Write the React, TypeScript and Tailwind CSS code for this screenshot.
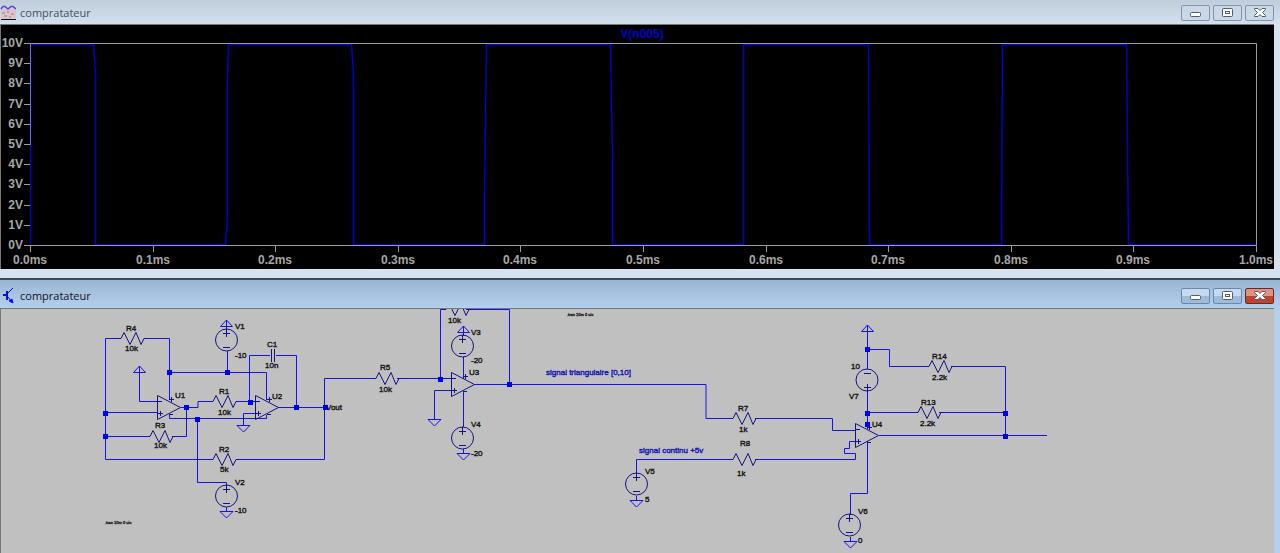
import React from 'react';

interface Label {
    x: number;
    y: number;
    text: string;
}

interface Point {
    x: number;
    y: number;
}

const VOLTS = [10, 9, 8, 7, 6, 5, 4, 3, 2, 1, 0];
const TIMES = [0, 1, 2, 3, 4, 5, 6, 7, 8, 9, 10];

// Plot frame, in viewBox units
const LEFT = 30;
const RIGHT = 1256;
const TOP = 18;
const BOTTOM = 220;

const TRACE =
    'M30 219V19H93L95 50V219H225L227 190V50L228 19H351L353 50V219H484V170L486 19H610L612 130V219H743V19H868L869 219H1001L1002 19H1126L1128 219H1256';

const WIRES = [
    'M119 29.5H105.5V150.5H211M145 29.5H169.5V91',
    'M139.5 64V92.5H158M105.5 103.5H158M181 98.5H198V92.5H211',
    'M186.5 98V127.5H172M105.5 127.5H148',
    'M169.5 63.5H266.5V91M227.5 42V63',
    'M249.5 92V46.5H270M276 46.5H296.5V98',
    'M236 92.5H256M243.5 115V104.5H256M278 98.5H325',
    'M169.5 106V109.5H266.5V106M197.5 110V173.5H226.5V177',
    'M236 150.5H324.5V69.5H374M397 69.5H452',
    'M440.5 70V.5H444M466 .5H509.5V75M434.5 109V81.5H452',
    'M463.5 48V70M463.5 82V118M474 75.5H706V109.5H731M755 109.5H832.5V121.5H856',
    'M636.5 165V150.5H731M755 150.5H855.5V144.5H844.5V139.5H849.5V132.5H856',
    'M867.5 23V60M867.5 83V120M867 40.5H889.5V57.5H928M951 57.5H1005.5V127M867 103.5H916M939 103.5H1005',
    'M879 126.5H1047M867.5 132V184.5H850.5V206',
];

const NODES: Point[] = [
    { x: 105, y: 104 },
    { x: 105, y: 127 },
    { x: 169, y: 63 },
    { x: 227, y: 63 },
    { x: 186, y: 98 },
    { x: 197, y: 110 },
    { x: 250, y: 93 },
    { x: 296, y: 98 },
    { x: 325, y: 98 },
    { x: 440, y: 70 },
    { x: 509, y: 75 },
    { x: 867, y: 40 },
    { x: 867, y: 104 },
    { x: 867, y: 115 },
    { x: 1005, y: 104 },
    { x: 1005, y: 127 },
];

const RESISTORS: Point[] = [
    { x: 119, y: 29 },
    { x: 148, y: 127 },
    { x: 211, y: 92 },
    { x: 211, y: 150 },
    { x: 374, y: 69 },
    { x: 444, y: 0 },
    { x: 731, y: 109 },
    { x: 731, y: 150 },
    { x: 927, y: 57 },
    { x: 916, y: 103 },
];

const AMPS: Point[] = [
    { x: 157, y: 98 },
    { x: 255, y: 98 },
    { x: 451, y: 75 },
    { x: 855, y: 126 },
];

const SOURCES: Point[] = [
    { x: 226, y: 31 },
    { x: 226, y: 187 },
    { x: 462, y: 37 },
    { x: 462, y: 129 },
    { x: 636, y: 175 },
    { x: 849, y: 216 },
];

const GROUNDS_UP: Point[] = [
    { x: 139, y: 57 },
    { x: 226, y: 11 },
    { x: 463, y: 17 },
    { x: 867, y: 16 },
];

const GROUNDS_DOWN: Point[] = [
    { x: 226, y: 208 },
    { x: 243, y: 122 },
    { x: 434, y: 116 },
    { x: 463, y: 150 },
    { x: 636, y: 197 },
    { x: 850, y: 238 },
];

const LABELS: Label[] = [
    { x: 126, y: 22, text: 'R4' },
    { x: 125, y: 42, text: '10k' },
    { x: 235, y: 20, text: 'V1' },
    { x: 235, y: 49, text: '-10' },
    { x: 267, y: 38, text: 'C1' },
    { x: 265, y: 59, text: '10n' },
    { x: 175, y: 89, text: 'U1' },
    { x: 219, y: 85, text: 'R1' },
    { x: 218, y: 106, text: '10k' },
    { x: 272, y: 90, text: 'U2' },
    { x: 326, y: 101, text: 'Vout' },
    { x: 155, y: 119, text: 'R3' },
    { x: 154, y: 139, text: '10k' },
    { x: 219, y: 143, text: 'R2' },
    { x: 220, y: 163, text: '5k' },
    { x: 235, y: 176, text: 'V2' },
    { x: 235, y: 204, text: '-10' },
    { x: 380, y: 61, text: 'R5' },
    { x: 379, y: 83, text: '10k' },
    { x: 448, y: 14, text: '10k' },
    { x: 471, y: 26, text: 'V3' },
    { x: 471, y: 54, text: '-20' },
    { x: 469, y: 66, text: 'U3' },
    { x: 471, y: 118, text: 'V4' },
    { x: 471, y: 147, text: '-20' },
    { x: 738, y: 102, text: 'R7' },
    { x: 739, y: 123, text: '1k' },
    { x: 740, y: 137, text: 'R8' },
    { x: 737, y: 167, text: '1k' },
    { x: 645, y: 165, text: 'V5' },
    { x: 645, y: 193, text: '5' },
    { x: 858, y: 205, text: 'V6' },
    { x: 858, y: 234, text: '0' },
    { x: 851, y: 60, text: '10' },
    { x: 849, y: 90, text: 'V7' },
    { x: 872, y: 118, text: 'U4' },
    { x: 932, y: 50, text: 'R14' },
    { x: 932, y: 71, text: '2.2k' },
    { x: 921, y: 96, text: 'R13' },
    { x: 920, y: 117, text: '2.2k' },
];

const WaveIcon = () => (
    <svg width="16" height="16" viewBox="0 0 16 16" fill="none" aria-hidden="true">
        <rect x="1" y="4" width="15" height="10" fill="#dcc4cc" />
        <path d="M1 4L3 1.5H5L8 4L11 1.5H13L16 4" stroke="#5548c8" strokeWidth="1.5" />
        <path d="M2 8h3M7 7h2M11 9h3M4 11h3M9 12h2" stroke="#a87878" />
        <path d="M1 14.5h15" stroke="#111" />
    </svg>
);

const TransistorIcon = () => (
    <svg width="16" height="16" viewBox="0 0 16 16" fill="none" stroke="#0a0af0" aria-hidden="true">
        <path d="M3 7H7" strokeWidth="2" />
        <path d="M7 3V12" strokeWidth="2" />
        <path d="M8 5L13 0M8 9L11 13" />
        <path d="M13 15L9 13L12 11Z" fill="#0a0af0" />
    </svg>
);

const MinimizeIcon = () => (
    <svg width="12" height="10" viewBox="0 0 12 10" aria-hidden="true">
        <rect x=".5" y="4.5" width="10" height="4" rx="1" fill="#fff" stroke="#555c68" />
    </svg>
);

const MaximizeIcon = () => (
    <svg width="12" height="10" viewBox="0 0 12 10" fill="#fff" stroke="#555c68" aria-hidden="true">
        <rect x=".5" y=".5" width="10" height="8" rx="1" />
        <rect x="3.5" y="3.5" width="4" height="2" />
    </svg>
);

const CloseIcon = () => (
    <svg width="12" height="10" viewBox="0 0 12 10" aria-hidden="true">
        <path d="M.5 .5H4L6 2.5L8 .5H11.5V1.5L8.5 4.5L11.5 7.5V8.5H8L6 6.5L4 8.5H.5V7.5L3.5 4.5L.5 1.5Z" fill="#fff" stroke="#555c68" />
    </svg>
);

interface TitleBarProps {
    icon: React.ReactNode;
    title: string;
    active?: boolean;
}

const TitleBar: React.FC<TitleBarProps> = ({ icon, title, active }) => {
    const button = active
        ? 'flex h-4 w-[29px] items-center justify-center rounded-xs border border-[#6b87ab] bg-linear-to-b from-[#c6d9ee] from-50% to-[#9dbcdc] to-50%'
        : 'flex h-4 w-[29px] items-center justify-center rounded-xs border border-[#8494b0] bg-[#c9d7e6]';
    const close = active
        ? 'flex h-4 w-[29px] items-center justify-center rounded-xs border border-[#6d2622] bg-linear-to-b from-[#dc9488] from-50% to-[#c2402c] to-50%'
        : button;

    return (
        <header
            className={
                active
                    ? 'flex h-7 items-center bg-linear-to-b from-[#98b5d2] to-[#b5d0ec] pt-1 pr-1.5'
                    : 'flex h-6 items-center bg-linear-to-b from-[#c0cedb] to-[#d3e0ee] pt-0.5 pr-1.5'
            }
        >
            {icon}
            <h2 className={active ? 'ml-1 flex-1 text-[11px] text-[#10151c]' : 'ml-1 flex-1 text-[11px] text-[#48505a]'}>{title}</h2>
            <div className="flex gap-[3px]">
                <button type="button" aria-label="Minimize" className={button}><MinimizeIcon /></button>
                <button type="button" aria-label="Maximize" className={button}><MaximizeIcon /></button>
                <button type="button" aria-label="Close" className={close}><CloseIcon /></button>
            </div>
        </header>
    );
};

const Waveform = () => (
    <svg viewBox="1 0 1273 244" className="block w-full bg-black" fill="none" fontFamily="'Liberation Sans', Arial, sans-serif" fontSize="12" fontWeight="bold">
        <path d={TRACE} transform="translate(.5 .5)" stroke="#0000c8" strokeWidth="1.5" />
        {/* Axes and ticks */}
        <g stroke="#9c9c9c">
            <path d={`M${LEFT} ${TOP + 0.5}H${RIGHT + 0.5}V${BOTTOM + 0.5}H${LEFT}`} />
            {VOLTS.map((v) => (
                <path key={v} d={`M24 ${Math.round(BOTTOM - v * 20.2) + 0.5}h6`} />
            ))}
            {TIMES.map((t) => (
                <path key={t} d={`M${Math.round(LEFT + t * 122.6) + 0.5} 221v6`} />
            ))}
        </g>
        <path d={`M${LEFT + 0.5} ${TOP}v102`} stroke="#7068e0" />
        <g fill="#a6a6a6">
            {VOLTS.map((v) => (
                <text key={v} x="23" y={Math.round(BOTTOM - v * 20.2) + 4} textAnchor="end">{v}V</text>
            ))}
            {TIMES.map((t) => (
                <text key={t} x={Math.round(LEFT + t * 122.6)} y="239" textAnchor="middle">{(t / 10).toFixed(1)}ms</text>
            ))}
        </g>
        <text x="642" y="13" textAnchor="middle" fill="#0000c8">V(n005)</text>
    </svg>
);

const Schematic = () => (
    <svg width="1273" height="244" viewBox="1 0 1273 244" className="block shrink-0" fill="none" fontFamily="'Liberation Sans', Arial, sans-serif">
        <g stroke="#1414e6">
            {WIRES.map((d) => (
                <path key={d} d={d} />
            ))}
            {GROUNDS_UP.map(({ x, y }) => (
                <path key={`${x}-${y}`} d={`M${x + 0.5} ${y}l6 6.5h-12zv10`} />
            ))}
            {GROUNDS_DOWN.map(({ x, y }) => (
                <path key={`${x}-${y}`} d={`M${x - 6} ${y - 5.5}h13l-6.5 6.5zM${x + 0.5} ${y - 10}v4`} />
            ))}
        </g>
        <g stroke="#141480">
            {RESISTORS.map(({ x, y }) => (
                <path key={`${x}-${y}`} d={`M${x} ${y + 0.5}h2l3 -6l6 12l6 -12l5 12l3 -6h2`} />
            ))}
            {AMPS.map(({ x, y }) => (
                <g key={`${x}-${y}`}>
                    <path d={`M${x + 0.5} ${y - 11.5}v24l23 -12z`} />
                    <path d={`M${x + 1} ${y - 5.5}h4M${x + 1} ${y + 6.5}h5M${x + 3.5} ${y + 4}v5M${x + 12} ${y - 7.5}h5M${x + 14.5} ${y - 10}v5M${x + 12} ${y + 7.5}h4`} />
                </g>
            ))}
            {SOURCES.map(({ x, y }) => (
                <g key={`${x}-${y}`}>
                    <circle cx={x + 0.5} cy={y} r="11" />
                    <path d={`M${x + 0.5} ${y - 11}v8M${x - 3} ${y - 6.5}h7M${x - 3} ${y + 7.5}h7`} />
                </g>
            ))}
            {/* V7 is wired upside down */}
            <circle cx="867" cy="71" r="11" />
            <path d="M867.5 75v8M864 78.5h7M864 64.5h7" />
            <path d="M271.5 40v13M274.5 40v13" />
        </g>
        <g fill="#0000f0">
            {NODES.map(({ x, y }) => (
                <rect key={`${x}-${y}`} x={x - 2} y={y - 2} width="5" height="5" />
            ))}
        </g>
        <g fill="#181818" stroke="#181818" strokeWidth=".4" fontSize="8">
            {LABELS.map(({ x, y, text }) => (
                <text key={`${x}-${y}`} x={x} y={y}>{text}</text>
            ))}
        </g>
        <g fill="#1414b4" stroke="#1414b4" strokeWidth=".4" fontSize="8">
            <text x="546" y="66">signal triangulaire [0,10]</text>
            <text x="639" y="144">signal continu +5v</text>
        </g>
        <g fill="#181818" stroke="#181818" strokeWidth=".3" fontSize="4">
            <text x="105" y="215">.tran 10m 0 uic</text>
            <text x="567" y="7">.tran 10m 0 uic</text>
        </g>
    </svg>
);

const App: React.FC = () => (
    <main className="flex h-screen flex-col overflow-hidden bg-[#d5e2ef] font-['Open_Sans',sans-serif]">
        <section>
            <TitleBar icon={<WaveIcon />} title="compratateur" />
            <div className="mr-1.5 border-t border-l border-[#777] bg-black">
                <Waveform />
            </div>
        </section>
        <section className="mt-[9px] flex min-h-0 flex-1 flex-col border-t-2 border-[#3f4a58] bg-[#b5d0ec]">
            <TitleBar icon={<TransistorIcon />} title="compratateur" active />
            <div className="mr-1.5 flex-1 overflow-hidden border-t border-l border-[#777] bg-[#c0c0c0]">
                <Schematic />
            </div>
        </section>
    </main>
);

export default App;
